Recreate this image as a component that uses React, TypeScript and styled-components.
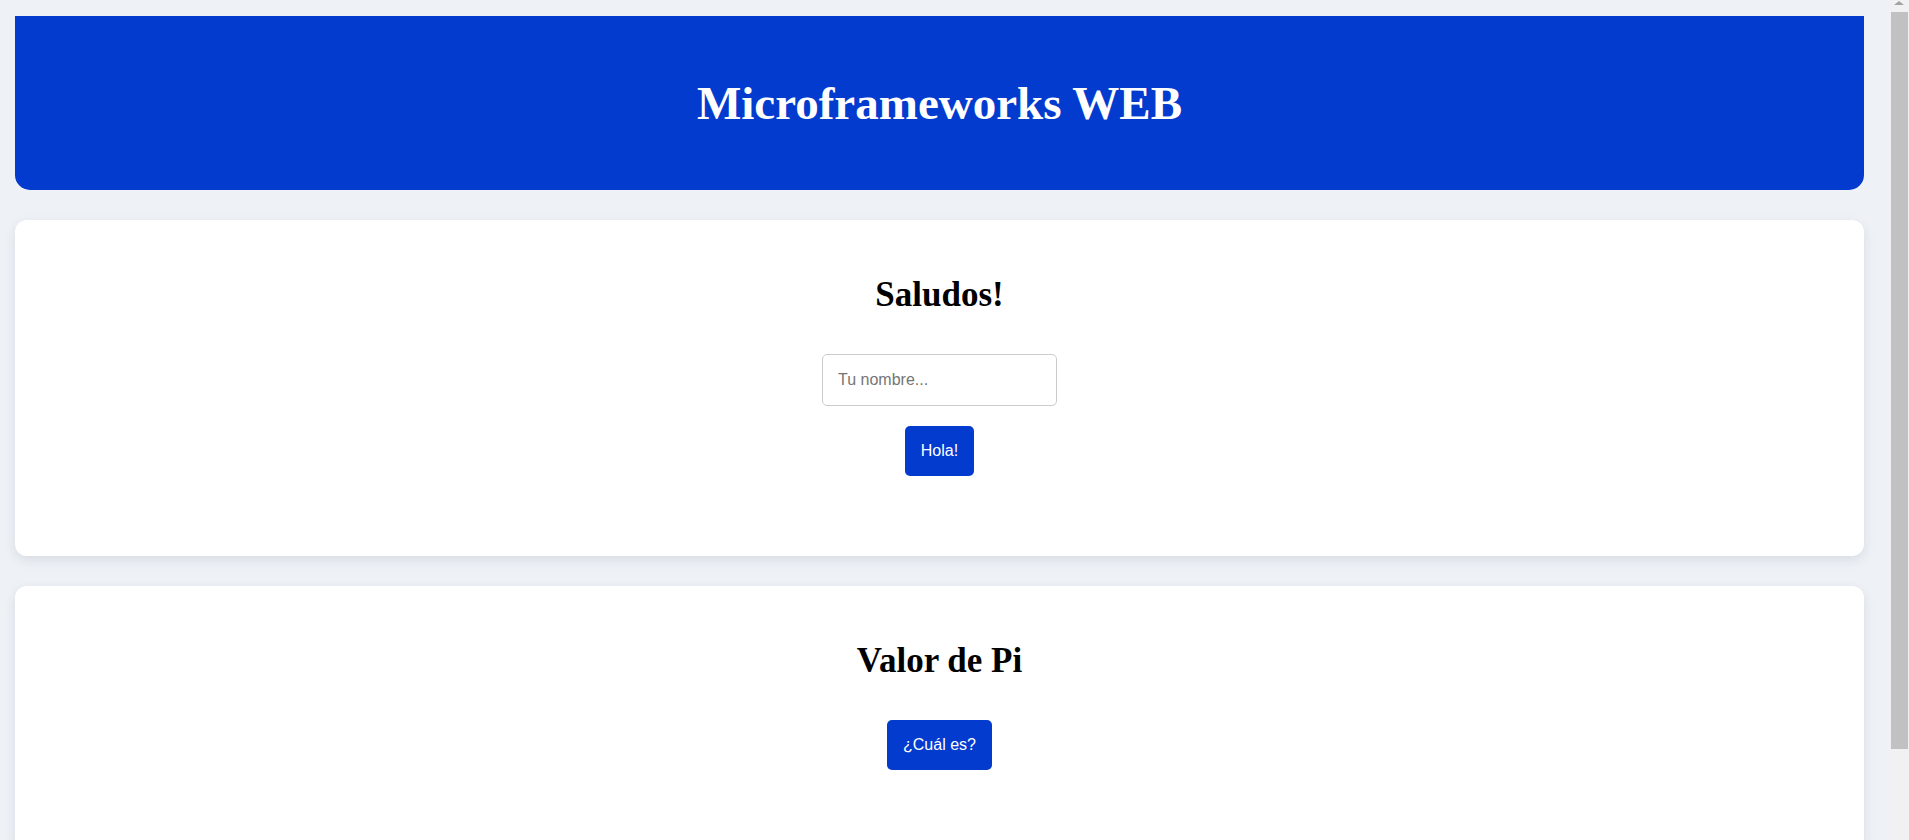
import React from "react";
import styled, { createGlobalStyle } from "styled-components";

const Global = createGlobalStyle`
  html, body {
    margin: 0;
    padding: 0;
    background: #eef2f7;
  }
  body {
    font-family: "Liberation Sans", Arial, sans-serif;
  }
`;

const Page = styled.div`
  display: flex;
  flex-direction: column;
  gap: 30px;
  padding: 16px 45px 80px 15px;
`;

const Header = styled.header`
  height: 174px;
  background: #043bcf;
  border-radius: 0 0 15px 15px;
  display: flex;
  align-items: center;
  justify-content: center;
`;

const Title = styled.h1`
  margin: 0;
  color: #ffffff;
  font-family: "Liberation Serif", "Times New Roman", serif;
  font-weight: 700;
  font-size: 47px;
  line-height: normal;
`;

const Card = styled.section`
  background: #ffffff;
  border-radius: 12px;
  box-shadow: 0 4px 12px rgba(30, 40, 60, 0.1);
  padding: 55px 20px 80px;
  display: flex;
  flex-direction: column;
  align-items: center;
`;

const CardTitle = styled.h2`
  margin: 0 0 39px;
  color: #000;
  font-family: "Liberation Serif", "Times New Roman", serif;
  font-weight: 700;
  font-size: 35px;
  line-height: normal;
`;

const Stack = styled.div`
  display: flex;
  flex-direction: column;
  align-items: center;
  gap: 20px;
`;

const Input = styled.input`
  box-sizing: border-box;
  width: 235px;
  padding: 16px 15px;
  border: 1px solid #cccccc;
  border-radius: 5px;
  font-family: "Liberation Sans", Arial, sans-serif;
  font-size: 16px;
  line-height: normal;
  color: #222;
  outline: none;
  &::placeholder {
    color: #757575;
  }
`;

const Button = styled.button`
  padding: 16px;
  border: none;
  border-radius: 5px;
  background: #043bcf;
  color: #ffffff;
  font-family: "Liberation Sans", Arial, sans-serif;
  font-size: 16px;
  line-height: normal;
  cursor: pointer;
`;

/* decorative stand-in for the browser scrollbar seen in the reference */
const ScrollTrack = styled.div`
  position: fixed;
  top: 0;
  right: 0;
  width: 20px;
  height: 100vh;
  background: #f1f1f1;
  display: flex;
  flex-direction: column;
  align-items: center;
`;

const ScrollArrow = styled.div`
  width: 0;
  height: 0;
  margin-top: 1px;
  border-left: 5px solid transparent;
  border-right: 5px solid transparent;
  border-bottom: 4px solid #a3a3a3;
`;

const ScrollThumb = styled.div`
  margin: 7px 1px 0 2px;
  align-self: stretch;
  height: 737px;
  background: #c1c1c1;
`;

export default function App() {
  return (
    <>
      <Global />
      <Page>
        <Header>
          <Title>Microframeworks WEB</Title>
        </Header>
        <Card>
          <CardTitle>Saludos!</CardTitle>
          <Stack>
            <Input type="text" placeholder="Tu nombre..." />
            <Button>Hola!</Button>
          </Stack>
        </Card>
        <Card>
          <CardTitle>Valor de Pi</CardTitle>
          <Stack>
            <Button>¿Cuál es?</Button>
          </Stack>
        </Card>
      </Page>
      <ScrollTrack aria-hidden="true">
        <ScrollArrow />
        <ScrollThumb />
      </ScrollTrack>
    </>
  );
}
